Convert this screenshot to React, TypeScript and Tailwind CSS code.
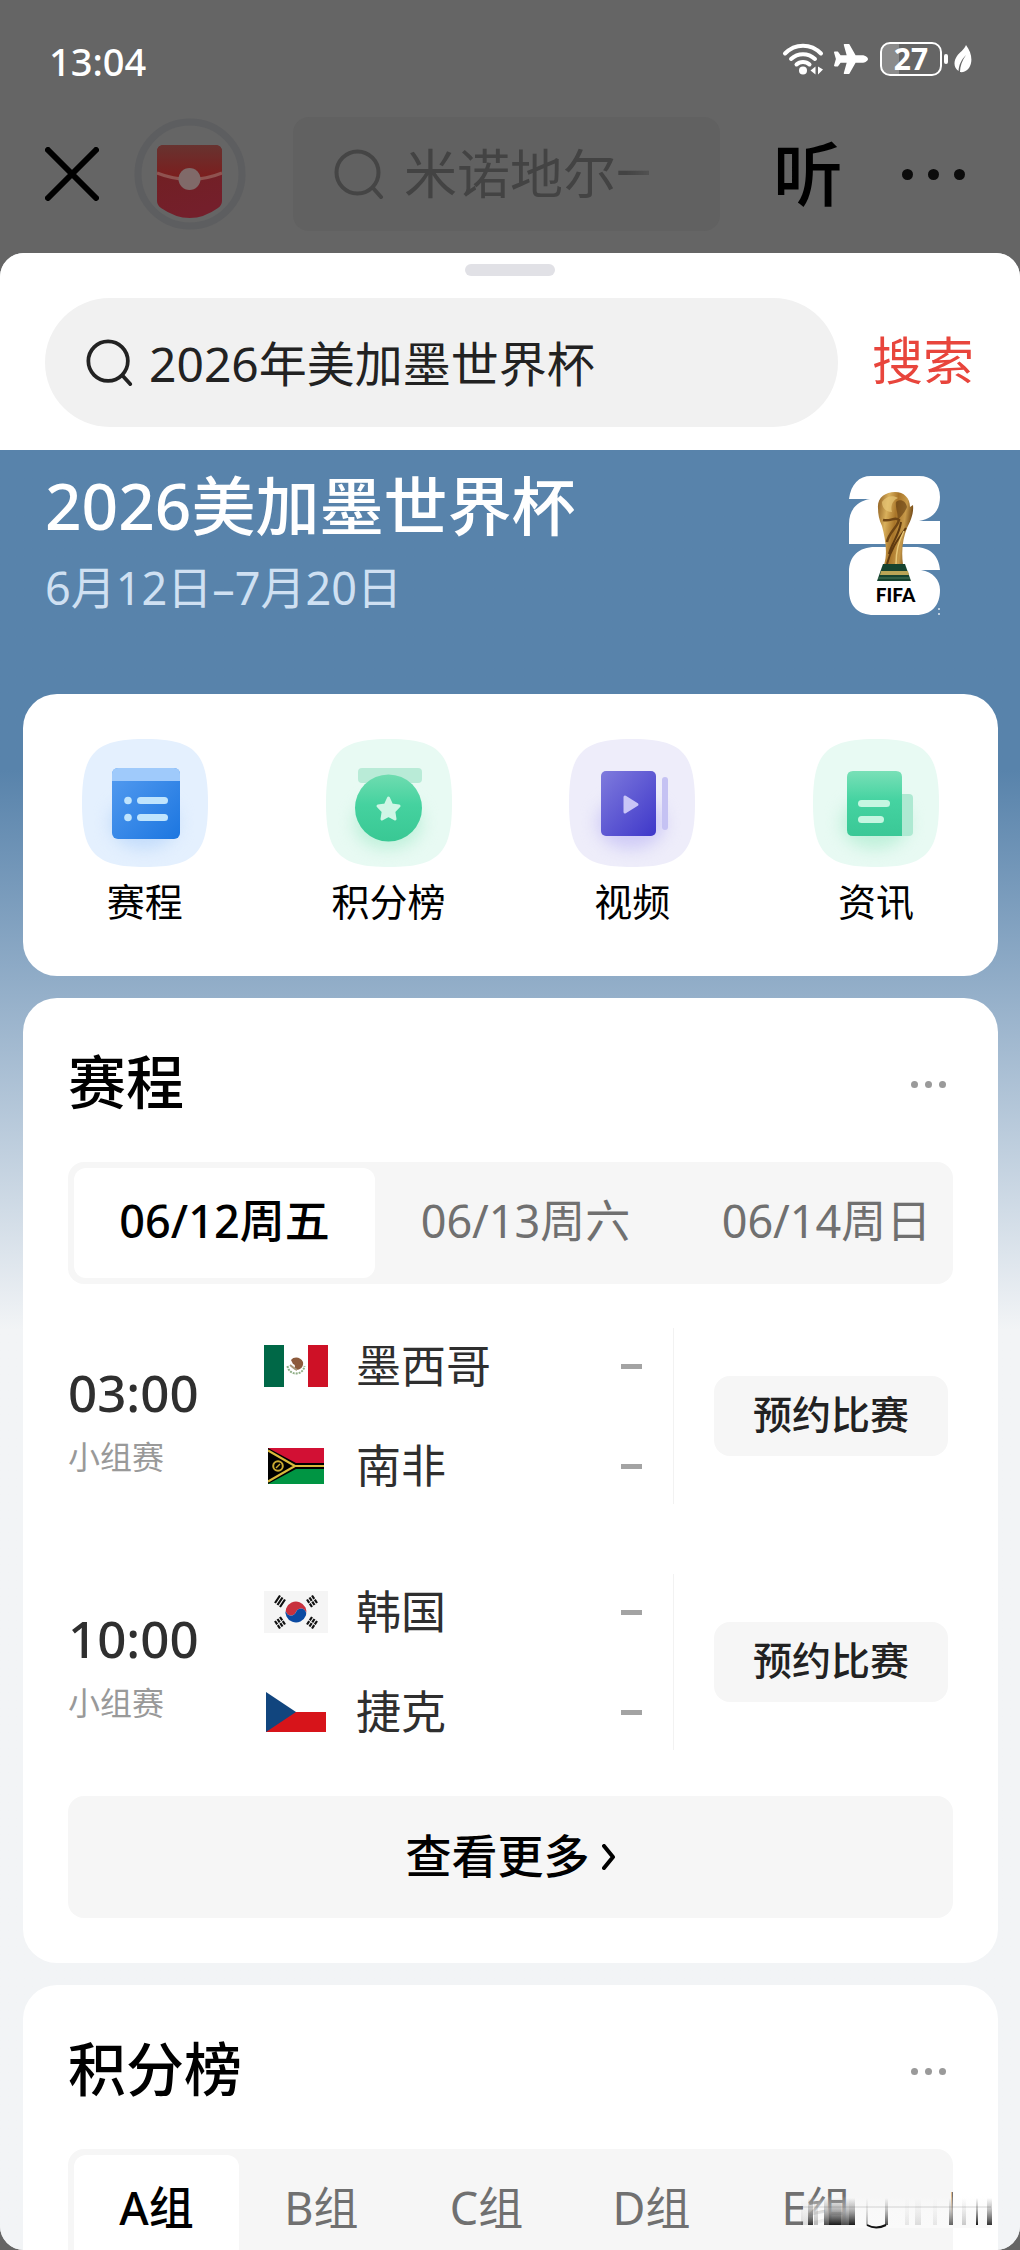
import { useState } from "react";
import type { ReactNode } from "react";
import { FaPlane } from "react-icons/fa";

function WifiIcon() {
  return (
    <svg className="h-[34px] w-[42px]" viewBox="0 0 42 34" fill="none" stroke="#fff" strokeWidth="4" strokeLinecap="round" aria-hidden="true">
      <path d="M3 11.500C13 1 29 1 39 11.500" />
      <path d="M9 17C16 10.500 26 10.500 33 17" />
      <path d="M14.500 22.500C18 19 24 19 27.500 22.500" />
      <circle cx="21" cy="28.500" r="4" fill="#fff" stroke="none" />
      <path d="M33.500 24.500v8l-5-4zM36 24.500v8l5-5z" fill="#fff" stroke="none" />
    </svg>
  );
}

function LeafIcon() {
  return (
    <svg className="h-[28px] w-[18px]" viewBox="0 0 18 28" aria-hidden="true">
      <path d="M12 0C18 8 19 17 15 23C12 27 8 27.500 6 27C6 21 8 16 12 10C7 15 5 20 4.500 26C0 23 -1 17 3 11C6 7 10 5 12 0Z" fill="#fff" />
    </svg>
  );
}

function SearchGlyph({ color, className }: { color: string; className: string }) {
  return (
    <svg className={className} viewBox="0 0 50 50" fill="none" stroke={color} strokeWidth="4" strokeLinecap="round" aria-hidden="true">
      <circle cx="23.500" cy="23.500" r="21" />
      <path d="M39 39L47 48" />
    </svg>
  );
}

function RedPacket() {
  return (
    <svg className="h-28 w-28" viewBox="0 0 112 112" aria-hidden="true">
      <defs>
        <linearGradient id="packetTop" x1="0" y1="0" x2="0" y2="1">
          <stop offset="0" stopColor="#673330" />
          <stop offset="1" stopColor="#7d1c1c" />
        </linearGradient>
        <linearGradient id="packetBody" x1="0" y1="0" x2="0.300" y2="1">
          <stop offset="0" stopColor="#70201f" />
          <stop offset="1" stopColor="#741f2b" />
        </linearGradient>
      </defs>
      <circle cx="56" cy="56" r="52" fill="none" stroke="#5d5e60" strokeWidth="7" />
      <path d="M23 34Q23 27 30 27H81Q88 27 88 34V83Q88 87 84 90Q56 110 27 90Q23 87 23 83Z" fill="url(#packetBody)" />
      <path d="M23 34Q23 27 30 27H81Q88 27 88 34V55Q56 68 23 55Z" fill="url(#packetTop)" />
      <path d="M23 55Q56 68 88 55" fill="none" stroke="#8f5350" strokeWidth="3" />
      <circle cx="55.500" cy="61" r="11" fill="#806a69" />
    </svg>
  );
}

function CupLogo() {
  return (
    <svg className="h-[140px] w-[92px]" viewBox="0 0 92 140" role="img" aria-label="FIFA 26">
      <defs>
        <linearGradient id="gold" x1="0" y1="0" x2="1" y2="0.300">
          <stop offset="0" stopColor="#8a5a1e" />
          <stop offset="0.300" stopColor="#d9b05c" />
          <stop offset="0.550" stopColor="#a87428" />
          <stop offset="0.800" stopColor="#c79a4a" />
          <stop offset="1" stopColor="#6e4514" />
        </linearGradient>
      </defs>
      <path d="M0 23C2 8 10 0 22 0H70C83 0 91 8 91 21C91 34 84 43 70 45H91V68H0V48C0 34 8 25 21 23Z" fill="#fff" />
      <path d="M0 96C0 80 10 71 26 71H66C81 71 90 80 91 94H72C84 96 91 104 91 114C91 130 82 139 67 139H25C9 139 0 130 0 114Z" fill="#fff" />
      <path d="M29 32C28 22 36 16 46 16C55 16 61 22 61 31L64 29C65 38 61 46 58 52C54 62 52 74 54 89H35C39 76 36 62 33 50C30 44 29 38 29 32Z" fill="url(#gold)" />
      <path d="M33 26C37 20 44 19 49 22C44 24 41 30 43 36C37 36 33 32 33 26Z" fill="#e8c878" opacity="0.700" />
      <path d="M47 26C51 22 57 25 58 31C56 37 51 41 48 45C50 38 46 32 47 26Z" fill="#5f3a10" opacity="0.600" />
      <path d="M34 44C42 46 46 40 50 44C48 52 40 56 38 66" fill="none" stroke="#6e4514" strokeWidth="2.500" />
      <path d="M57 52C50 62 42 72 38 88M52 46C50 60 42 68 40 78" fill="none" stroke="#5f3a10" strokeWidth="2" />
      <path d="M55 55C49 66 47 76 47 88" fill="none" stroke="#e8c878" strokeWidth="1.500" />
      <path d="M34 88H56L62 105H28Z" fill="#16432f" />
      <path d="M32 95H59L60 99H31Z" fill="#b9a456" />
      <path d="M29 102H61" stroke="#4a7a5c" strokeWidth="1" />
      <text x="46.500" y="126" textAnchor="middle" fontSize="19" fontWeight="900" fontFamily="Lato, 'Noto Sans', sans-serif" fill="#000">FIFA</text>
      <path d="M89 133h2M89 138h2" stroke="#dbe6f0" strokeWidth="1.500" />
    </svg>
  );
}

function Tile({ tint, glow, children }: { tint: string; glow: string; children: ReactNode }) {
  return (
    <svg className="h-32 w-[126px]" viewBox="0 0 126 128" aria-hidden="true">
      <path d="M0 64C0 14 13 0 63 0S126 14 126 64S113 128 63 128S0 114 0 64Z" fill={tint} />
      <ellipse cx="62" cy="84" rx="34" ry="26" fill={glow} className="blur-[8px]" />
      {children}
    </svg>
  );
}

function ScheduleIcon() {
  return (
    <Tile tint="#e4f0fe" glow="#c3dcfb">
      <defs>
        <linearGradient id="blueFace" x1="0" y1="0" x2="1" y2="1">
          <stop offset="0" stopColor="#559cf0" />
          <stop offset="1" stopColor="#1c76e0" />
        </linearGradient>
      </defs>
      <rect x="30" y="29" width="68" height="71" rx="6" fill="url(#blueFace)" />
      <path d="M30 42V35Q30 29 36 29H92Q98 29 98 35V42Z" fill="#9fcafb" />
      <g fill="#bfe4fd">
        <circle cx="46" cy="61.500" r="3.800" />
        <circle cx="46" cy="78.500" r="3.800" />
        <rect x="55" y="58" width="31" height="7" rx="3.500" />
        <rect x="55" y="75" width="31" height="7" rx="3.500" />
      </g>
    </Tile>
  );
}

function StandingsIcon() {
  return (
    <Tile tint="#e8faf3" glow="#bff0da">
      <defs>
        <linearGradient id="greenRound" x1="0" y1="0" x2="0" y2="1">
          <stop offset="0" stopColor="#6fdcb0" />
          <stop offset="0.450" stopColor="#45d29f" />
          <stop offset="1" stopColor="#39c894" />
        </linearGradient>
      </defs>
      <rect x="32" y="29" width="64" height="15" rx="4" fill="#b9ebd7" />
      <circle cx="62.500" cy="69" r="33.500" fill="url(#greenRound)" />
      <path d="M62.500 59L65.700 66L73 67L67.800 72.500L69 80L62.500 76.500L56 80L57.200 72.500L52 67L59.300 66Z" fill="#d0f6e6" stroke="#d0f6e6" strokeWidth="3" strokeLinejoin="round" />
    </Tile>
  );
}

function VideoIcon() {
  return (
    <Tile tint="#eeedfa" glow="#cfcbf6">
      <defs>
        <linearGradient id="violetFace" x1="0" y1="0" x2="1" y2="1">
          <stop offset="0" stopColor="#7f7bdd" />
          <stop offset="1" stopColor="#3e37c9" />
        </linearGradient>
      </defs>
      <rect x="32" y="32" width="55" height="65" rx="5" fill="url(#violetFace)" />
      <rect x="93" y="38" width="6" height="53" rx="3" fill="#c5c2f3" />
      <path d="M56 58V73L68 65.500Z" fill="#c9c5f7" stroke="#c9c5f7" strokeWidth="3" strokeLinejoin="round" />
    </Tile>
  );
}

function NewsIcon() {
  return (
    <Tile tint="#e8faf3" glow="#bff0da">
      <defs>
        <linearGradient id="greenPage" x1="0" y1="0" x2="0" y2="1">
          <stop offset="0" stopColor="#79e0b7" />
          <stop offset="0.450" stopColor="#45d3a1" />
          <stop offset="1" stopColor="#3ac896" />
        </linearGradient>
      </defs>
      <path d="M88 55H96Q100 55 100 59V93Q100 97 96 97H88Z" fill="#aee9d2" />
      <path d="M34 38Q34 32 40 32H83Q89 32 89 38V97H40Q34 97 34 91Z" fill="url(#greenPage)" />
      <rect x="45" y="61" width="32" height="7" rx="3.500" fill="#c5f6e1" />
      <rect x="45" y="77" width="26" height="7" rx="3.500" fill="#c5f6e1" />
    </Tile>
  );
}

function MexicoFlag() {
  return (
    <svg className="h-[42px] w-16" viewBox="0 0 64 42" aria-hidden="true">
      <rect width="64" height="42" fill="#fff" />
      <rect width="20" height="42" fill="#006847" />
      <rect x="44" width="20" height="42" fill="#ce1126" />
      <path d="M23.500 21C25 31 39 31 40.500 21" fill="none" stroke="#8fae86" strokeWidth="2" strokeDasharray="2 1" />
      <path d="M27 15C30 11 37 12 39 17C40 22 36 25 32 25C29 24 33 20 29 19Z" fill="#8c5a3c" />
      <path d="M26 20C29 22 30 24 33 25" stroke="#a8977a" strokeWidth="2" fill="none" />
    </svg>
  );
}

function VanuatuFlag() {
  return (
    <svg className="h-9 w-14" viewBox="0 0 56 36" aria-hidden="true">
      <rect width="56" height="18" fill="#d21034" />
      <rect y="18" width="56" height="18" fill="#009543" />
      <path d="M0 0L28 15H56V21H28L0 36Z" fill="#000" />
      <path d="M0 2.500L27 18L0 33.500M27 18H56" fill="none" stroke="#d9b93b" strokeWidth="2.200" />
      <circle cx="10" cy="18" r="4.800" fill="none" stroke="#c9a932" strokeWidth="2" />
      <path d="M8 20L12 16" stroke="#c9a932" strokeWidth="1.500" />
    </svg>
  );
}

function KoreaFlag() {
  return (
    <svg className="h-[42px] w-16" viewBox="0 0 64 42" aria-hidden="true">
      <rect width="64" height="42" fill="#f5f5f5" />
      <g transform="rotate(20 32 21)">
        <path d="M21.500 21A10.500 10.500 0 0 1 42.500 21A5.250 5.250 0 0 0 32 21A5.250 5.250 0 0 1 21.500 21Z" fill="#c8313e" />
        <path d="M42.500 21A10.500 10.500 0 0 1 21.500 21A5.250 5.250 0 0 0 32 21A5.250 5.250 0 0 1 42.500 21Z" fill="#0b4aa2" />
      </g>
      <g stroke="#111" strokeWidth="2.200">
        <path d="M11 12L16 4.500M13.500 14L18.500 6.500M16 16L21 8.500" />
        <path d="M53 12L48 4.500M50.500 14L45.500 6.500M48 16L43 8.500" strokeDasharray="4 1" />
        <path d="M11 30L16 37.500M13.500 28L18.500 35.500M16 26L21 33.500" strokeDasharray="4 1" />
        <path d="M53 30L48 37.500M50.500 28L45.500 35.500M48 26L43 33.500" strokeDasharray="4 1" />
      </g>
    </svg>
  );
}

function CzechFlag() {
  return (
    <svg className="h-10 w-[60px]" viewBox="0 0 60 40" aria-hidden="true">
      <rect width="60" height="20" fill="#fff" />
      <rect y="20" width="60" height="20" fill="#d7141a" />
      <path d="M0 0L30 20L0 40Z" fill="#11457e" />
    </svg>
  );
}

function MoreDots() {
  return (
    <button type="button" aria-label="更多" className="flex gap-[7px] px-[7px] pt-3 pb-[7px]">
      <span className="size-[7px] rounded-full bg-[#9a9a9a]" />
      <span className="size-[7px] rounded-full bg-[#9a9a9a]" />
      <span className="size-[7px] rounded-full bg-[#9a9a9a]" />
    </button>
  );
}

function CardHeader({ title }: { title: string }) {
  return (
    <div className="flex items-center justify-between">
      <h2 className="text-[58px] leading-[80px] font-medium text-black">{title}</h2>
      <MoreDots />
    </div>
  );
}

function Tabs({ label, items, itemClass }: { label: string; items: string[]; itemClass: string }) {
  const [active, setActive] = useState(0);
  return (
    <div role="tablist" aria-label={label} className="mt-10 flex h-[122px] overflow-hidden rounded-2xl bg-[#f6f6f6] p-[6px]">
      {items.map((item, i) => (
        <button
          key={item}
          type="button"
          role="tab"
          aria-selected={i === active}
          onClick={() => setActive(i)}
          className={
            (i === active ? "bg-white font-medium text-black " : "text-[#707070] ") +
            "shrink-0 rounded-xl pb-1 text-[45px] leading-[60px] whitespace-nowrap " +
            itemClass
          }
        >
          {item}
        </button>
      ))}
    </div>
  );
}

type Team = { name: string; flag: ReactNode };
type Match = { time: string; stage: string; teams: Team[] };

const matches: Match[] = [
  {
    time: "03:00",
    stage: "小组赛",
    teams: [
      { name: "墨西哥", flag: <MexicoFlag /> },
      { name: "南非", flag: <VanuatuFlag /> },
    ],
  },
  {
    time: "10:00",
    stage: "小组赛",
    teams: [
      { name: "韩国", flag: <KoreaFlag /> },
      { name: "捷克", flag: <CzechFlag /> },
    ],
  },
];

function MatchRow({ match }: { match: Match }) {
  return (
    <li className="flex h-44 items-center">
      <div className="w-[196px]">
        <p className="text-[51px] leading-[78px] font-medium text-[#2f2f2f]">{match.time}</p>
        <p className="mt-1 text-[32px] leading-[44px] text-[#999999]">{match.stage}</p>
      </div>
      <div className="flex flex-1 flex-col gap-10 pr-[31px]">
        {match.teams.map((team) => (
          <div key={team.name} className="flex items-center">
            <span className="flex w-16 justify-center">{team.flag}</span>
            <span className="ml-7 flex-1 text-[45px] leading-[60px] text-[#2f2f2f]">{team.name}</span>
            <span className="h-[5px] w-[21px] bg-[#a3a3a3]" />
          </div>
        ))}
      </div>
      <div className="flex h-full items-center border-l border-[#f2f2f2] pr-[5px] pl-10">
        <button type="button" className="h-20 w-[234px] rounded-2xl bg-[#f6f6f6] pb-1 text-[39px] leading-[52px] font-medium text-[#222222]">
          预约比赛
        </button>
      </div>
    </li>
  );
}

const shortcuts = [
  { label: "赛程", icon: <ScheduleIcon /> },
  { label: "积分榜", icon: <StandingsIcon /> },
  { label: "视频", icon: <VideoIcon /> },
  { label: "资讯", icon: <NewsIcon /> },
];

const streaks = [
  { x: 14, w: 7, o: 0.12 },
  { x: 21, w: 5, o: 0.8 },
  { x: 27, w: 4, o: 0.25 },
  { x: 37, w: 5, o: 0.7 },
  { x: 42, w: 12, o: 0.9 },
  { x: 54, w: 8, o: 0.7 },
  { x: 62, w: 6, o: 0.9 },
  { x: 79, w: 2, o: 0.3 },
  { x: 98, w: 3, o: 0.7 },
  { x: 118, w: 4, o: 0.08 },
  { x: 128, w: 6, o: 0.12 },
  { x: 146, w: 4, o: 0.08 },
  { x: 162, w: 4, o: 0.6 },
  { x: 175, w: 4, o: 0.2 },
  { x: 189, w: 2, o: 0.9 },
  { x: 200, w: 5, o: 0.8 },
];

function Smudge() {
  return (
    <svg className="pointer-events-none absolute right-[27px] bottom-5 h-[34px] w-[206px]" viewBox="0 0 206 34" aria-hidden="true">
      <defs>
        <linearGradient id="streak" x1="0" y1="0" x2="0" y2="1">
          <stop offset="0" stopColor="#000" stopOpacity="0" />
          <stop offset="0.400" stopColor="#333" stopOpacity="0.350" />
          <stop offset="1" stopColor="#000" stopOpacity="1" />
        </linearGradient>
        <linearGradient id="veil" x1="0" y1="0" x2="0" y2="1">
          <stop offset="0" stopColor="#fafafa" stopOpacity="0" />
          <stop offset="0.500" stopColor="#fafafa" stopOpacity="0.800" />
          <stop offset="1" stopColor="#fafafa" stopOpacity="1" />
        </linearGradient>
      </defs>
      <rect x="16" y="0" width="188" height="32" fill="url(#veil)" />
      <path d="M2 11H204" stroke="#777" strokeOpacity="0.150" strokeWidth="2" />
      {streaks.map((s) => (
        <rect key={s.x} x={s.x} y="2" width={s.w} height="27" fill="url(#streak)" opacity={s.o} />
      ))}
      <path d="M80 29Q89 34 99 29" fill="none" stroke="#111" strokeWidth="2" />
    </svg>
  );
}

export default function App() {
  return (
    <div className="flex h-screen flex-col overflow-hidden bg-[#656565] font-['Noto_Sans','Noto_Sans_CJK_SC',sans-serif]">
      <header className="shrink-0">
        <div className="flex h-[117px] items-center justify-between pr-12 pl-[49px]">
          <span className="pt-1 text-[38px] leading-[56px] font-medium text-white">13:04</span>
          <div className="flex items-center">
            <WifiIcon />
            <FaPlane className="ml-2.5 size-[34px] text-white" aria-hidden="true" />
            <span className="ml-3 flex h-[34px] w-[62px] items-center justify-center rounded-[10px] border-2 border-white bg-linear-to-r from-[#8b8b8b] from-30% to-transparent to-30% text-[30px] leading-[30px] font-bold text-white">
              27
            </span>
            <span className="ml-0.5 h-[10px] w-1 rounded-full bg-white" />
            <span className="ml-1.5">
              <LeafIcon />
            </span>
          </div>
        </div>
        <div className="flex h-[114px] items-center pr-[55px] pl-[45px]">
          <button type="button" aria-label="关闭">
            <svg className="size-[54px]" viewBox="0 0 54 54" fill="none" stroke="#000" strokeWidth="6" strokeLinecap="round" aria-hidden="true">
              <path d="M3 3L51 51M51 3L3 51" />
            </svg>
          </button>
          <button type="button" aria-label="红包" className="ml-[35px]">
            <RedPacket />
          </button>
          <label className="ml-[47px] flex h-full min-w-0 flex-1 items-center rounded-2xl bg-[#616161] pl-[41px]">
            <SearchGlyph color="#454545" className="size-[50px] shrink-0" />
            <input
              type="search"
              aria-label="站内搜索"
              placeholder="米诺地尔一"
              className="ml-5 h-20 w-[270px] min-w-0 bg-transparent text-[53px] leading-[80px] outline-none [mask-image:linear-gradient(to_right,#000_82%,transparent_100%)] placeholder:text-[#434343]"
            />
          </label>
          <button type="button" className="ml-[53px] text-[70px] leading-[90px] font-medium text-black">
            听
          </button>
          <button type="button" aria-label="更多选项" className="ml-[59px] flex gap-[15px]">
            <span className="size-[11px] rounded-full bg-[#0c0c0c]" />
            <span className="size-[11px] rounded-full bg-[#0c0c0c]" />
            <span className="size-[11px] rounded-full bg-[#0c0c0c]" />
          </button>
        </div>
      </header>

      <main className="relative mt-[22px] flex min-h-0 flex-1 flex-col overflow-hidden rounded-3xl bg-[#f2f4f6]">
        <div className="shrink-0 bg-white pt-[11px] pb-[23px]">
          <div className="mx-auto h-3 w-[90px] rounded-md bg-[#e1e1e6]" />
          <form className="mt-[22px] flex items-center pr-[46px] pl-[45px]" onSubmit={(e) => e.preventDefault()}>
            <label className="flex h-[129px] min-w-0 flex-1 items-center rounded-full bg-[#f1f1f1] pl-[41px]">
              <SearchGlyph color="#222222" className="size-[47px] shrink-0" />
              <input
                type="text"
                aria-label="搜索内容"
                defaultValue="2026年美加墨世界杯"
                className="ml-4 h-20 min-w-0 flex-1 bg-transparent pb-1 text-[48px] leading-[76px] text-[#222222] outline-none"
              />
            </label>
            <button type="submit" className="ml-[34px] pb-1.5 text-[51px] leading-[70px] text-[#e8453c]">
              搜索
            </button>
          </form>
        </div>

        <div className="flex flex-col gap-[22px] bg-linear-to-b from-[#5883ab] from-[320px] to-[#f2f4f6] to-[880px] pr-[22px] pl-[23px]">
          <section className="flex justify-between pr-[57px] pb-[54px] pl-[22px]">
            <div className="pt-4">
              <h1 className="text-[64px] leading-[80px] font-medium text-white">2026美加墨世界杯</h1>
              <p className="mt-3 text-[45px] leading-[60px] text-[#cfe0f2]">6月12日–7月20日</p>
            </div>
            <div className="pt-[26px]">
              <CupLogo />
            </div>
          </section>

          <nav className="grid grid-cols-4 rounded-[34px] bg-white pt-[45px] pb-[51px]">
            {shortcuts.map((s) => (
              <a key={s.label} href={"#" + s.label} className="flex flex-col items-center text-[38px] leading-[48px] text-black">
                {s.icon}
                <span className="mt-2.5">{s.label}</span>
              </a>
            ))}
          </nav>

          <section id="赛程" className="rounded-[34px] bg-white px-[45px] pt-11 pb-[45px]">
            <CardHeader title="赛程" />
            <Tabs label="比赛日期" items={["06/12周五", "06/13周六", "06/14周日"]} itemClass="w-[301px]" />
            <ul className="mt-11 flex flex-col gap-[70px]">
              {matches.map((m) => (
                <MatchRow key={m.time} match={m} />
              ))}
            </ul>
            <button type="button" className="mt-[46px] flex h-[122px] w-full items-center justify-center gap-3 rounded-2xl bg-[#f6f6f6] pb-1 text-[46px] leading-[60px] font-medium text-black">
              查看更多
              <svg className="mt-1 h-[26px] w-[14px]" viewBox="0 0 14 26" fill="none" stroke="#000" strokeWidth="4" strokeLinecap="round" strokeLinejoin="round" aria-hidden="true">
                <path d="M2 2L11 13L2 24" />
              </svg>
            </button>
          </section>

          <section id="积分榜" className="rounded-t-[34px] bg-white px-[45px] pt-11 pb-[45px]">
            <CardHeader title="积分榜" />
            <Tabs label="小组" items={["A组", "B组", "C组", "D组", "E组", "F组"]} itemClass="w-[165px]" />
          </section>
        </div>
        <Smudge />
      </main>
    </div>
  );
}
